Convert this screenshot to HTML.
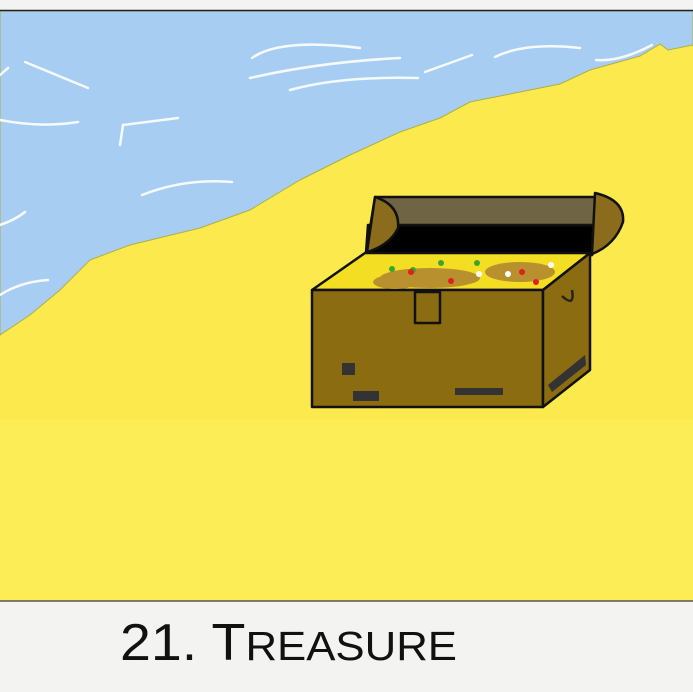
<!DOCTYPE html>
<html><head><meta charset="utf-8"><style>
html,body{margin:0;padding:0;width:693px;height:692px;overflow:hidden;background:#f3f3f1}
</style></head><body>
<svg width="693" height="692" viewBox="0 0 693 692" xmlns="http://www.w3.org/2000/svg" style="display:block">
<rect x="0" y="0" width="693" height="692" fill="#f3f3f1"/>
<rect x="0" y="10" width="693" height="591" fill="#fbe94e"/>
<path d="M0,11 H693 V45 L668,50 L660,44 L640,56 L590,70 L560,84 L520,92 L470,102 L440,118 L400,132 L350,155 L300,180 L250,210 L200,228 L130,245 L90,260 L60,290 L30,315 L0,335 Z" fill="#a8cdf2" stroke="#b0b040" stroke-width="1"/>
<rect x="0" y="420" width="693" height="181" fill="#fdef5c" opacity="0.6"/>
<g fill="none" stroke="#ffffff" stroke-width="2.5" stroke-linecap="round" opacity="0.9">
<path d="M252,58 Q280,38 360,48"/><path d="M250,78 Q320,62 400,58"/><path d="M290,90 Q340,76 418,78"/>
<path d="M425,72 L472,55"/><path d="M495,57 Q525,42 580,48"/><path d="M596,60 Q620,62 652,45"/>
<path d="M25,62 L88,88"/><path d="M0,75 L8,68"/><path d="M0,120 Q40,128 78,122"/>
<path d="M120,145 L123,125 L178,118"/><path d="M142,195 Q185,178 232,182"/>
<path d="M0,225 Q15,220 25,212"/><path d="M0,295 Q20,282 48,280"/>
</g>
<line x1="0" y1="10.5" x2="693" y2="10.5" stroke="#222" stroke-width="1.5"/>
<line x1="0" y1="601" x2="693" y2="601" stroke="#555" stroke-width="1.5"/>
<g stroke="#111" stroke-width="2.5" stroke-linejoin="round">
<path d="M375,197 L597,197 L592,255 L366,253 Z" fill="#6f6443"/>
<path d="M368,225 L597,225 L592,255 L366,253 Z" fill="#000"/>
<path d="M375,197 Q400,205 398,228 Q390,245 367,252 Z" fill="#8b6c1c"/>
<path d="M595,193 Q625,200 623,222 Q615,245 592,254 Z" fill="#8b6c1c"/>
<path d="M365,253 L590,253 L543,290 L312,290 Z" fill="#f4de23"/>
<path d="M312,290 L543,290 L543,407 L312,407 Z" fill="#8b6c10"/>
<path d="M543,290 L590,253 L590,370 L543,407 Z" fill="#8b6c10"/>
<rect x="415" y="292" width="25" height="31" fill="none"/>
</g>
<g fill="#b8902e"><ellipse cx="430" cy="278" rx="50" ry="10"/><ellipse cx="520" cy="272" rx="35" ry="10"/><ellipse cx="395" cy="282" rx="22" ry="7"/></g>
<g fill="#3ba52e"><circle cx="392" cy="269" r="3"/><circle cx="441" cy="263" r="3"/><circle cx="477" cy="263" r="3"/><circle cx="413" cy="270" r="3"/></g>
<g fill="#e02020"><circle cx="411" cy="272" r="3"/><circle cx="451" cy="281" r="3"/><circle cx="522" cy="272" r="3"/><circle cx="536" cy="282" r="3"/></g>
<g fill="#fff"><circle cx="551" cy="265" r="3"/><circle cx="479" cy="274" r="3"/><circle cx="508" cy="274" r="3"/></g>
<g fill="#333"><rect x="342" y="363" width="13" height="12"/><rect x="353" y="391" width="26" height="10"/><rect x="455" y="388" width="48" height="7"/><path d="M548,385 L585,355 L586,365 L552,392 Z"/></g>
<g fill="none" stroke="#222" stroke-width="2.5"><path d="M562,296 Q575,308 572,290"/></g>
<text x="120" y="660" font-family="Liberation Sans, sans-serif" font-size="52" fill="#111" textLength="337" lengthAdjust="spacingAndGlyphs">21. T<tspan font-size="41">REASURE</tspan></text>
</svg>
</body></html>
